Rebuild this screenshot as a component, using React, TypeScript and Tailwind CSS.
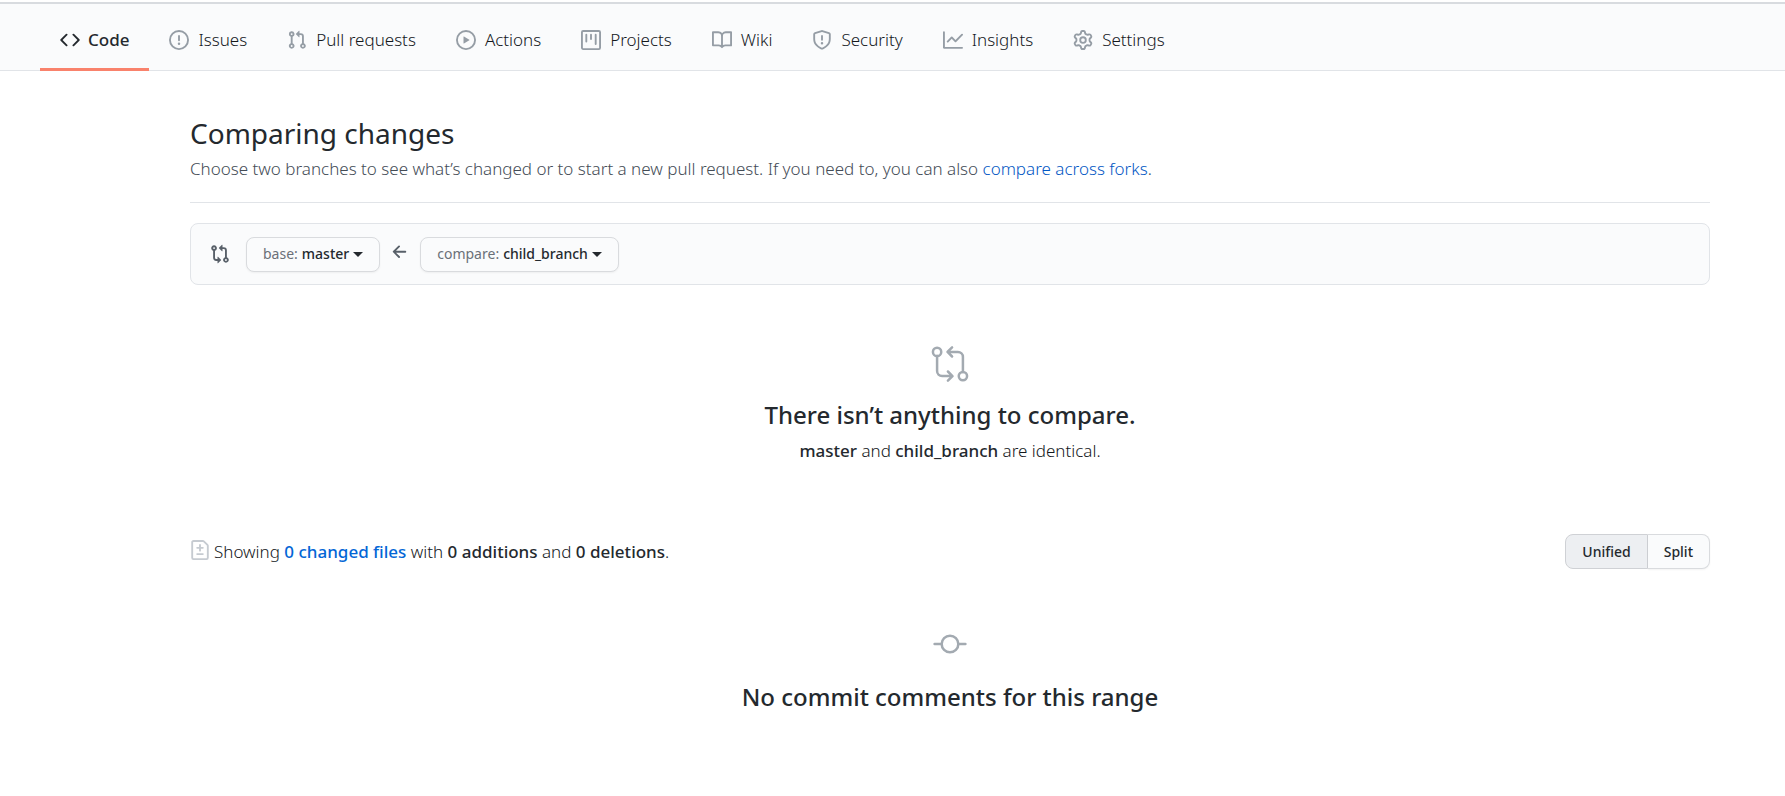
import React from "react";

const paths = {
  code: "M4.72 3.22a.75.75 0 011.06 1.06L2.06 8l3.72 3.72a.75.75 0 11-1.06 1.06L.47 8.53a.75.75 0 010-1.06l4.25-4.25zm6.56 0a.75.75 0 10-1.06 1.06L13.94 8l-3.72 3.72a.75.75 0 101.06 1.06l4.25-4.25a.75.75 0 000-1.06l-4.25-4.25z",
  issue: "M8 1.5a6.5 6.5 0 100 13 6.5 6.5 0 000-13zM0 8a8 8 0 1116 0A8 8 0 010 8zm9 3a1 1 0 11-2 0 1 1 0 012 0zm-.25-6.25a.75.75 0 00-1.5 0v3.5a.75.75 0 001.5 0v-3.5z",
  pull: "M7.177 3.073L9.573.677A.25.25 0 0110 .854v4.792a.25.25 0 01-.427.177L7.177 3.427a.25.25 0 010-.354zM3.75 2.5a.75.75 0 100 1.5.75.75 0 000-1.5zm-2.25.75a2.25 2.25 0 113 2.122v5.256a2.251 2.251 0 11-1.5 0V5.372A2.25 2.25 0 011.5 3.25zM11 2.5h-1V4h1a1 1 0 011 1v5.628a2.251 2.251 0 101.5 0V5A2.5 2.5 0 0011 2.5zm1 10.25a.75.75 0 111.5 0 .75.75 0 01-1.5 0zM3.75 12a.75.75 0 100 1.5.75.75 0 000-1.5z",
  play: "M1.5 8a6.5 6.5 0 1113 0 6.5 6.5 0 01-13 0zM8 0a8 8 0 100 16A8 8 0 008 0zM6.379 5.227A.25.25 0 006 5.442v5.117a.25.25 0 00.379.214l4.264-2.559a.25.25 0 000-.428L6.379 5.227z",
  project: "M1.75 0A1.75 1.75 0 000 1.75v12.5C0 15.216.784 16 1.75 16h12.5A1.75 1.75 0 0016 14.25V1.75A1.75 1.75 0 0014.25 0H1.75zM1.5 1.75a.25.25 0 01.25-.25h12.5a.25.25 0 01.25.25v12.5a.25.25 0 01-.25.25H1.75a.25.25 0 01-.25-.25V1.75zM11.75 3a.75.75 0 00-.75.75v7.5a.75.75 0 001.5 0v-7.5a.75.75 0 00-.75-.75zm-8.25.75a.75.75 0 011.5 0v5.5a.75.75 0 01-1.5 0v-5.5zM8 3a.75.75 0 00-.75.75v3.5a.75.75 0 001.5 0v-3.5A.75.75 0 008 3z",
  book: "M0 1.75A.75.75 0 01.75 1h4.253c1.227 0 2.317.59 3 1.501A3.744 3.744 0 0111.006 1h4.245a.75.75 0 01.75.75v10.5a.75.75 0 01-.75.75h-4.507a2.25 2.25 0 00-1.591.659l-.622.621a.75.75 0 01-1.06 0l-.622-.621A2.25 2.25 0 005.258 13H.75a.75.75 0 01-.75-.75V1.75zm8.755 3a2.25 2.25 0 012.25-2.25H14.5v9h-3.757c-.71 0-1.4.201-1.992.572l.004-7.322zm-1.504 7.324l.004-5.073-.002-2.253A2.25 2.25 0 005.003 2.5H1.5v9h3.757a3.75 3.75 0 011.994.574z",
  shield: "M7.467.133a1.75 1.75 0 011.066 0l5.25 1.68A1.75 1.75 0 0115 3.48V7c0 1.566-.32 3.182-1.303 4.682-.983 1.498-2.585 2.813-5.032 3.855a1.7 1.7 0 01-1.33 0c-2.447-1.042-4.049-2.357-5.032-3.855C1.32 10.182 1 8.566 1 7V3.48a1.75 1.75 0 011.217-1.667l5.25-1.68zm.61 1.429a.25.25 0 00-.153 0l-5.25 1.68a.25.25 0 00-.174.238V7c0 1.358.275 2.666 1.057 3.86.784 1.194 2.121 2.34 4.366 3.297a.2.2 0 00.154 0c2.245-.956 3.582-2.104 4.366-3.298C13.225 9.666 13.5 8.36 13.5 7V3.48a.25.25 0 00-.174-.237l-5.25-1.68zM9 10.5a1 1 0 11-2 0 1 1 0 012 0zm-.25-5.75a.75.75 0 10-1.5 0v3a.75.75 0 001.5 0v-3z",
  graph: "M1.5 1.75a.75.75 0 00-1.5 0v12.5c0 .414.336.75.75.75h14.5a.75.75 0 000-1.5H1.5V1.75zm14.28 2.53a.75.75 0 00-1.06-1.06L10 7.94 7.53 5.47a.75.75 0 00-1.06 0L3.22 8.72a.75.75 0 001.06 1.06L7 7.06l2.47 2.47a.75.75 0 001.06 0l5.25-5.25z",
  gear: "M7.429 1.525a6.593 6.593 0 011.142 0c.036.003.108.036.137.146l.289 1.105c.147.56.55.967.997 1.189.174.086.341.183.501.29.417.278.97.423 1.53.27l1.102-.303c.11-.03.175.016.195.046.219.31.41.641.573.989.014.031.022.11-.059.19l-.815.806c-.411.406-.562.957-.53 1.456a4.588 4.588 0 010 .582c-.032.499.119 1.05.53 1.456l.815.806c.08.08.073.159.059.19a6.494 6.494 0 01-.573.99c-.02.029-.086.074-.195.045l-1.103-.303c-.559-.153-1.112-.008-1.529.27-.16.107-.327.204-.5.29-.449.222-.851.628-.998 1.189l-.289 1.105c-.029.11-.101.143-.137.146a6.613 6.613 0 01-1.142 0c-.036-.003-.108-.037-.137-.146l-.289-1.105c-.147-.56-.55-.967-.997-1.189a4.502 4.502 0 01-.501-.29c-.417-.278-.97-.423-1.53-.27l-1.102.303c-.11.03-.175-.016-.195-.046a6.492 6.492 0 01-.573-.989c-.014-.031-.022-.11.059-.19l.815-.806c.411-.406.562-.957.53-1.456a4.587 4.587 0 010-.582c.032-.499-.119-1.05-.53-1.456l-.815-.806c-.08-.08-.073-.159-.059-.19a6.44 6.44 0 01.573-.99c.02-.029.086-.075.195-.045l1.103.303c.559.153 1.112.008 1.529-.27.16-.107.327-.204.5-.29.449-.222.851-.628.998-1.189l.289-1.105c.029-.11.101-.143.137-.146zM8 0c-.236 0-.47.01-.701.03-.743.065-1.29.615-1.458 1.261l-.29 1.106c-.017.066-.078.158-.211.224a5.994 5.994 0 00-.668.386c-.123.082-.233.09-.3.071L3.27 2.776c-.644-.177-1.392.02-1.82.63a7.977 7.977 0 00-.704 1.217c-.315.675-.111 1.422.363 1.891l.815.806c.05.048.098.147.088.294a6.084 6.084 0 000 .772c.01.147-.038.246-.088.294l-.815.806c-.474.469-.678 1.216-.363 1.891.2.428.436.835.704 1.218.428.609 1.176.806 1.82.63l1.103-.303c.066-.019.176-.011.299.071.213.143.436.272.668.386.133.066.194.158.212.224l.289 1.106c.169.646.715 1.196 1.458 1.26a8.094 8.094 0 001.402 0c.743-.064 1.29-.614 1.458-1.26l.29-1.106c.017-.066.078-.158.211-.224a5.98 5.98 0 00.668-.386c.123-.082.233-.09.3-.071l1.102.302c.644.177 1.392-.02 1.82-.63.268-.382.505-.789.704-1.217.315-.675.111-1.422-.364-1.891l-.814-.806c-.05-.048-.098-.147-.088-.294a6.1 6.1 0 000-.772c-.01-.147.039-.246.088-.294l.814-.806c.475-.469.679-1.216.364-1.891a7.992 7.992 0 00-.704-1.218c-.428-.609-1.176-.806-1.82-.63l-1.103.303c-.066.019-.176.011-.299-.071a5.991 5.991 0 00-.668-.386c-.133-.066-.194-.158-.212-.224L10.16 1.29C9.99.645 9.444.095 8.701.031A8.094 8.094 0 008 0zm1.5 8a1.5 1.5 0 11-3 0 1.5 1.5 0 013 0zM11 8a3 3 0 11-6 0 3 3 0 016 0z",
  compare: "M9.573.677L7.177 3.073a.25.25 0 000 .354l2.396 2.396A.25.25 0 0010 5.646V4h1a1 1 0 011 1v5.628a2.251 2.251 0 101.5 0V5A2.5 2.5 0 0011 2.5h-1V.854a.25.25 0 00-.427-.177zM6 12v-1.646a.25.25 0 01.427-.177l2.396 2.396a.25.25 0 010 .354l-2.396 2.396A.25.25 0 016 15.146V13.5H5A2.5 2.5 0 012.5 11V5.372a2.25 2.25 0 111.5 0V11a1 1 0 001 1h1zM4 3.25a.75.75 0 11-1.5 0 .75.75 0 011.5 0zM12.75 12a.75.75 0 100 1.5.75.75 0 000-1.5z",
  arrow: "M7.78 12.53a.75.75 0 01-1.06 0L2.47 8.28a.75.75 0 010-1.06l4.25-4.25a.75.75 0 011.06 1.06L4.81 7h7.44a.75.75 0 010 1.5H4.81l2.97 2.97a.75.75 0 010 1.06z",
  diff: "M2.75 1.5a.25.25 0 00-.25.25v12.5c0 .138.112.25.25.25h10.5a.25.25 0 00.25-.25V4.664a.25.25 0 00-.073-.177l-2.914-2.914a.25.25 0 00-.177-.073H2.75zM1 1.75C1 .784 1.784 0 2.75 0h7.586c.464 0 .909.184 1.237.513l2.914 2.914c.329.328.513.773.513 1.237v9.586A1.75 1.75 0 0113.25 16H2.75A1.75 1.75 0 011 14.25V1.75zm7 1.5a.75.75 0 01.75.75v1.5h1.5a.75.75 0 010 1.5h-1.5v1.5a.75.75 0 01-1.5 0V7h-1.5a.75.75 0 010-1.5h1.5V4A.75.75 0 018 3.25zm-3 8a.75.75 0 01.75-.75h4.5a.75.75 0 010 1.5h-4.5a.75.75 0 01-.75-.75z",
};

type IconName = keyof typeof paths;

function Icon({ name, className }: { name: IconName; className?: string }) {
  return (
    <svg viewBox="0 0 16 16" fill="currentColor" fillRule="evenodd" aria-hidden="true" className={`size-5 shrink-0 ${className ?? ""}`}>
      <path d={paths[name]} />
    </svg>
  );
}

const tabs: { label: string; icon: IconName }[] = [
  { label: "Code", icon: "code" },
  { label: "Issues", icon: "issue" },
  { label: "Pull requests", icon: "pull" },
  { label: "Actions", icon: "play" },
  { label: "Projects", icon: "project" },
  { label: "Wiki", icon: "book" },
  { label: "Security", icon: "shield" },
  { label: "Insights", icon: "graph" },
  { label: "Settings", icon: "gear" },
];

function BranchButton({ kind, branch }: { kind: string; branch: string }) {
  return (
    <button type="button" className="flex h-[35px] items-center rounded-lg border border-[#d9dbde] bg-[#fafbfc] px-4 text-[14px] leading-5 font-medium text-[#24292e] shadow-xs">
      <span className="mr-1 font-normal text-[#6a7078]">{kind}:</span>
      <span>{branch}</span>
      <span className="ml-1 border-x-5 border-t-5 border-x-transparent border-t-[#24292e]" />
    </button>
  );
}

export default function App() {
  return (
    <div className="min-h-screen bg-white pt-[2px] font-['Noto_Sans','Open_Sans',sans-serif] text-[17px] leading-6 font-light text-[#14181c]">
      <nav aria-label="Repository" className="border-t-2 border-b border-t-[#d8dbdf] border-b-[#e1e4e8] bg-[#fafbfc] px-10">
        <ul className="-mb-px flex">
          {tabs.map(({ label, icon }, i) => (
            <li key={label}>
              <a
                href={`#${icon}`}
                aria-current={i === 0 ? "page" : undefined}
                className={`flex h-[67px] items-center border-b-3 px-5 pt-2 ${i === 0 ? "gap-2 border-[#f9826c] font-medium text-[#24292e]" : "gap-[9px] border-transparent"}`}
              >
                <Icon name={icon} className={i === 0 ? "" : "text-[#959da5]"} />
                {label}
              </a>
            </li>
          ))}
        </ul>
      </nav>

      <main className="pt-[42px] pr-[75px] pl-[190px]">
        <header className="border-b border-[#e1e4e8] pb-[19px]">
          <h1 className="text-[28px] leading-10 font-normal text-[#24292e]">Comparing changes</h1>
          <p className="pt-[2px] leading-7 text-[#444c56]">
            Choose two branches to see what’s changed or to start a new pull request. If you need to, you can also{" "}
            <a href="#forks" className="text-[#0358c4]">compare across forks</a>.
          </p>
        </header>

        <div className="mt-5 flex h-[62px] items-center rounded-lg border border-[#e1e4e8] bg-[#fafbfc] px-[19px]">
          <Icon name="compare" className="mr-4 text-[#586069]" />
          <BranchButton kind="base" branch="master" />
          <Icon name="arrow" className="mx-[10px] mb-1 text-[#586069]" />
          <BranchButton kind="compare" branch="child_branch" />
        </div>

        <section className="flex flex-col items-center pt-[59px] text-center">
          <svg viewBox="0 0 24 24" className="size-10 text-[#a3aab1]" fill="none" stroke="currentColor" strokeWidth="1.5" strokeLinecap="round" strokeLinejoin="round" aria-hidden="true">
            <circle cx="4.25" cy="4.75" r="2.5" />
            <circle cx="19.75" cy="19.25" r="2.5" />
            <path d="M4.25 7.25v9a3 3 0 003 3h6M10.75 16.5l2.75 2.75L10.75 22M19.75 16.75v-9a3 3 0 00-3-3h-6M13.25 2L10.5 4.75l2.75 2.75" />
          </svg>
          <h2 className="mt-[13px] text-[24px] leading-9 font-medium text-[#24292e]">There isn’t anything to compare.</h2>
          <p className="mt-1 leading-7">
            <span className="font-medium text-[#24292e]">master</span> and <span className="font-medium text-[#24292e]">child_branch</span> are identical.
          </p>
        </section>

        <div className="mt-[69px] flex items-center justify-between">
          <p className="flex items-center gap-1">
            <Icon name="diff" className="mb-1 text-[#c6cbd1]" />
            <span>
              Showing <a href="#files" className="font-medium text-[#0366d6]">0 changed files</a> with{" "}
              <strong className="font-medium text-[#24292e]">0 additions</strong> and <strong className="font-medium text-[#24292e]">0 deletions</strong>.
            </span>
          </p>
          <div className="flex h-[35px] text-[14px] leading-5 font-medium text-[#24292e]">
            <button type="button" aria-pressed="true" className="rounded-l-lg border border-[#cfd1d5] bg-[#edeff2] px-4">Unified</button>
            <button type="button" aria-pressed="false" className="rounded-r-lg border border-l-0 border-[#d9dbde] bg-[#fafbfc] px-4 shadow-xs">Split</button>
          </div>
        </div>

        <section className="flex flex-col items-center pt-[55px] pb-14 text-center">
          <svg viewBox="0 0 24 24" className="size-10 text-[#a3aab1]" fill="none" stroke="currentColor" strokeWidth="1.5" strokeLinecap="round" aria-hidden="true">
            <circle cx="12" cy="12" r="5" />
            <path d="M2.75 12H7M17 12h4.25" />
          </svg>
          <h2 className="mt-[15px] text-[24px] leading-9 font-medium text-[#24292e]">No commit comments for this range</h2>
        </section>
      </main>
    </div>
  );
}
